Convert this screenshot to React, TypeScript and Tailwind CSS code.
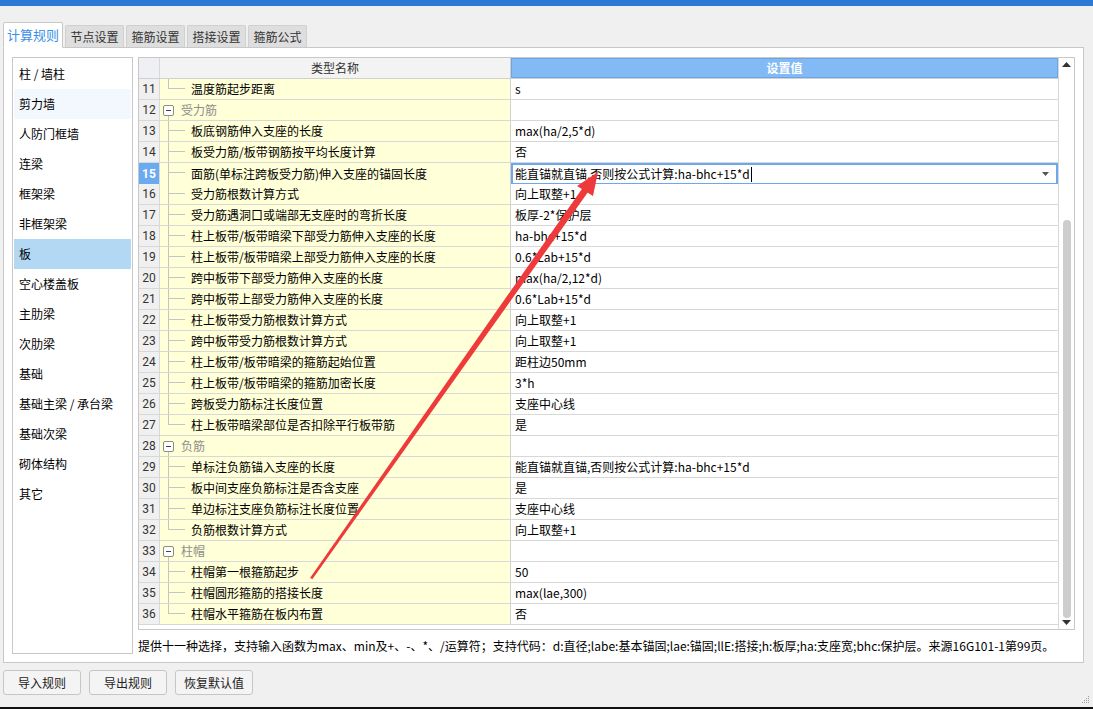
import React from 'react';

type Row = {
  n: number;
  name?: string;
  group?: string;
  val?: string;
  last?: boolean;
  sel?: boolean;
};

const rows: Row[] = [
  { n: 11, name: '温度筋起步距离', val: 's', last: true },
  { n: 12, group: '受力筋' },
  { n: 13, name: '板底钢筋伸入支座的长度', val: 'max(ha/2,5*d)' },
  { n: 14, name: '板受力筋/板带钢筋按平均长度计算', val: '否' },
  { n: 15, name: '面筋(单标注跨板受力筋)伸入支座的锚固长度', val: '能直锚就直锚,否则按公式计算:ha-bhc+15*d', sel: true },
  { n: 16, name: '受力筋根数计算方式', val: '向上取整+1' },
  { n: 17, name: '受力筋遇洞口或端部无支座时的弯折长度', val: '板厚-2*保护层' },
  { n: 18, name: '柱上板带/板带暗梁下部受力筋伸入支座的长度', val: 'ha-bhc+15*d' },
  { n: 19, name: '柱上板带/板带暗梁上部受力筋伸入支座的长度', val: '0.6*Lab+15*d' },
  { n: 20, name: '跨中板带下部受力筋伸入支座的长度', val: 'max(ha/2,12*d)' },
  { n: 21, name: '跨中板带上部受力筋伸入支座的长度', val: '0.6*Lab+15*d' },
  { n: 22, name: '柱上板带受力筋根数计算方式', val: '向上取整+1' },
  { n: 23, name: '跨中板带受力筋根数计算方式', val: '向上取整+1' },
  { n: 24, name: '柱上板带/板带暗梁的箍筋起始位置', val: '距柱边50mm' },
  { n: 25, name: '柱上板带/板带暗梁的箍筋加密长度', val: '3*h' },
  { n: 26, name: '跨板受力筋标注长度位置', val: '支座中心线' },
  { n: 27, name: '柱上板带暗梁部位是否扣除平行板带筋', val: '是', last: true },
  { n: 28, group: '负筋' },
  { n: 29, name: '单标注负筋锚入支座的长度', val: '能直锚就直锚,否则按公式计算:ha-bhc+15*d' },
  { n: 30, name: '板中间支座负筋标注是否含支座', val: '是' },
  { n: 31, name: '单边标注支座负筋标注长度位置', val: '支座中心线' },
  { n: 32, name: '负筋根数计算方式', val: '向上取整+1', last: true },
  { n: 33, group: '柱帽' },
  { n: 34, name: '柱帽第一根箍筋起步', val: '50' },
  { n: 35, name: '柱帽圆形箍筋的搭接长度', val: 'max(lae,300)' },
  { n: 36, name: '柱帽水平箍筋在板内布置', val: '否', last: true },
];

const sideItems = [
  '柱 / 墙柱',
  '剪力墙',
  '人防门框墙',
  '连梁',
  '框架梁',
  '非框架梁',
  '板',
  '空心楼盖板',
  '主肋梁',
  '次肋梁',
  '基础',
  '基础主梁 / 承台梁',
  '基础次梁',
  '砌体结构',
  '其它',
];

const tabs = ['计算规则', '节点设置', '箍筋设置', '搭接设置', '箍筋公式'];

const NameCell = ({ row }: { row: Row }) => {
  if (row.group) {
    return (
      <div className="flex items-stretch h-full bg-[#ffffd8] border-r border-[#d0d0d0]">
        <div className="relative w-[21px] shrink-0">
          <div className="absolute left-[3px] top-[5px] w-[11px] h-[11px] border border-[#8c8c8c] rounded-[2px] bg-white flex items-center justify-center">
            <div className="w-[5px] h-px bg-[#444]" />
          </div>
          <div className="absolute left-[8px] top-[16px] bottom-0 w-px bg-[#c4c4c4]" />
        </div>
        <span className="self-center text-[#8e8e8e]">{row.group}</span>
      </div>
    );
  }
  return (
    <div className="flex items-stretch h-full bg-[#ffffd8] border-r border-[#d0d0d0]">
      <div className="ml-[8px] w-[17px] shrink-0 flex flex-col">
        <div className="h-[10px] border-l border-b border-[#c4c4c4]" />
        <div className={row.last ? 'flex-1' : 'flex-1 border-l border-[#c4c4c4]'} />
      </div>
      <span className="self-center ml-[6px] text-black">{row.name}</span>
    </div>
  );
};

const ValueCell = ({ row }: { row: Row }) => {
  if (row.sel) {
    return (
      <div className="h-full border-2 border-[#6ca8ea] bg-white flex items-center pl-[2px] pr-[7px]">
        <span className="text-black">{row.val}</span>
        <span className="w-px h-[15px] bg-black ml-px" />
        <svg className="ml-auto" width="7" height="4" viewBox="0 0 7 4">
          <polygon points="0,0 7,0 3.5,4" fill="#555" />
        </svg>
      </div>
    );
  }
  return (
    <div className="h-full bg-white flex items-center pl-[4px] text-black">{row.val}</div>
  );
};

export default function App() {
  return (
    <div
      className="relative w-[1093px] h-[709px] overflow-hidden bg-[#f0f0f0] flex flex-col text-[12px] text-black"
      style={{ fontFamily: '"Noto Sans CJK SC", "Microsoft YaHei", sans-serif' }}
    >
      <div className="h-[6px] bg-[#2b7bd6] shrink-0" />

      {/* tabs */}
      <div className="flex items-end gap-[2px] pl-[3px] pt-[16px] shrink-0 relative z-10">
        {tabs.map((t, i) =>
          i === 0 ? (
            <div
              key={t}
              className="h-[26px] w-[60px] -mb-px flex items-center justify-center bg-white border border-[#c8c8c8] border-b-white rounded-t-[2px] text-[13px] text-[#3a8ee6]"
            >
              {t}
            </div>
          ) : (
            <div
              key={t}
              className="h-[22px] w-[59px] flex items-center justify-center bg-[#dedede] border border-b-0 border-[#d0d0d0] rounded-t-[2px] text-[#333]"
            >
              {t}
            </div>
          )
        )}
      </div>

      {/* panel */}
      <div className="mx-[3px] mr-[9px] h-[616px] shrink-0 border border-[#c8c8c8] bg-white flex pt-[9px] pl-[8px] pr-[8px] gap-[5px]">
        {/* side list */}
        <div className="w-[121px] h-[597px] border border-[#c8c8c8] p-px flex flex-col shrink-0">
          {sideItems.map((s, i) => (
            <div
              key={s}
              className={
                'h-[30px] flex items-center pl-[5px] shrink-0 ' +
                (i === 6 ? 'bg-[#b3d8f3]' : i === 1 ? 'bg-[#f2f8fd]' : '')
              }
            >
              {s}
            </div>
          ))}
        </div>

        {/* table + note */}
        <div className="flex-1 flex flex-col">
          <div className="h-[573px] border border-[#c8c8c8] flex">
            <div className="flex-1 flex flex-col">
              <div className="grid grid-cols-[21px_351px_1fr] h-[21px] border-b border-[#d0d0d0]">
                <div className="bg-[#eef0f3] border-r border-[#d8d8d8]" />
                <div className="bg-[#f3f3f3] border-r border-[#d0d0d0] flex items-center justify-center text-[#333]">
                  类型名称
                </div>
                <div className="bg-[#82baf6] border border-[#6aa5e6] flex items-center justify-center text-white font-bold">
                  设置值
                </div>
              </div>
              {rows.map((r) => (
                <div key={r.n} className="grid grid-cols-[21px_351px_1fr] h-[21px] border-b border-[#d8d8d8]">
                  <div
                    className={
                      r.sel
                        ? 'bg-[#6aaaf0] border-r border-[#d8d8d8] flex items-center justify-center text-white font-bold'
                        : 'bg-[#f0f0f0] border-r border-[#d8d8d8] flex items-center justify-center text-[#333]'
                    }
                    style={{ fontFamily: 'Roboto, "Noto Sans", sans-serif' }}
                  >
                    {r.n}
                  </div>
                  <NameCell row={r} />
                  <ValueCell row={r} />
                </div>
              ))}
            </div>
            {/* scrollbar */}
            <div className="w-[16px] border-l border-[#d8d8d8] bg-white flex flex-col items-center">
              <svg className="mt-[4px]" width="9" height="5" viewBox="0 0 9 5">
                <polygon points="0,5 9,5 4.5,0" fill="#333" />
              </svg>
              <div className="flex-1 flex flex-col justify-end pb-[2px]">
                <div className="w-[8px] h-[398px] rounded-full bg-[#cdcdcd]" />
              </div>
              <svg className="mb-[4px]" width="9" height="5" viewBox="0 0 9 5">
                <polygon points="0,0 9,0 4.5,5" fill="#333" />
              </svg>
            </div>
          </div>
          <div className="mt-[7px] whitespace-nowrap text-black">
            提供十一种选择，支持输入函数为max、min及+、-、*、/运算符；支持代码：d:直径;labe:基本锚固;lae:锚固;llE:搭接;h:板厚;ha:支座宽;bhc:保护层。来源16G101-1第99页。
          </div>
        </div>
      </div>

      {/* buttons */}
      <div className="flex gap-[8px] pl-[3px] mt-[7px] shrink-0">
        {['导入规则', '导出规则', '恢复默认值'].map((b) => (
          <div
            key={b}
            className="w-[78px] h-[25px] flex items-center justify-center border border-[#c6c6c6] rounded-[3px] bg-[#f4f4f4] text-[#222]"
          >
            {b}
          </div>
        ))}
      </div>

      <div className="flex-1 flex justify-end items-end pr-[3px] pb-[3px]">
        <svg width="8" height="8" viewBox="0 0 8 8">
          <g fill="#9a9a9a">
            <rect x="6" y="0" width="1" height="1" />
            <rect x="4" y="2" width="1" height="1" />
            <rect x="6" y="2" width="1" height="1" />
            <rect x="2" y="4" width="1" height="1" />
            <rect x="4" y="4" width="1" height="1" />
            <rect x="6" y="4" width="1" height="1" />
            <rect x="0" y="6" width="1" height="1" />
            <rect x="2" y="6" width="1" height="1" />
            <rect x="4" y="6" width="1" height="1" />
            <rect x="6" y="6" width="1" height="1" />
          </g>
        </svg>
      </div>
      <div className="h-[2px] bg-[#111] shrink-0" />

      {/* annotation arrow */}
      <svg className="absolute inset-0 pointer-events-none" width="1093" height="709">
        <polygon points="310,578 312.5,579 589.5,190 584,186" fill="#ee3a3a" />
        <polygon points="598,172 577,186 593,196" fill="#ee3a3a" />
      </svg>
    </div>
  );
}
